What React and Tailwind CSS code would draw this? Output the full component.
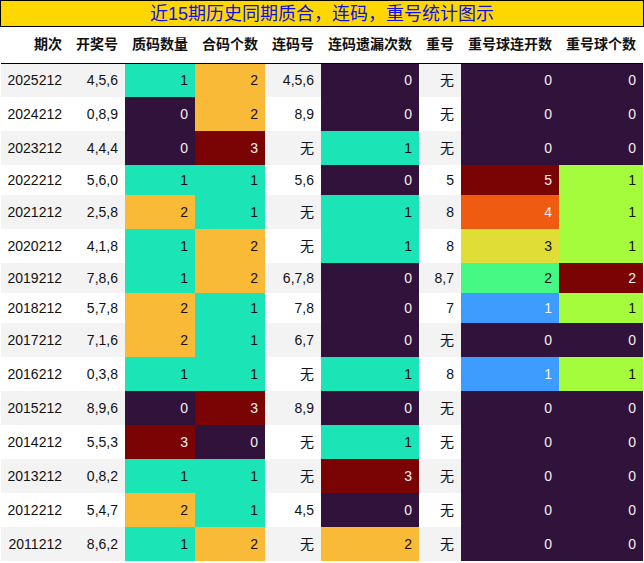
const rows = [
    ["2025212", "4,5,6", 1, 2, "4,5,6", 0, "无", 0, 0],
    ["2024212", "0,8,9", 0, 2, "8,9", 0, "无", 0, 0],
    ["2023212", "4,4,4", 0, 3, "无", 1, "无", 0, 0],
    ["2022212", "5,6,0", 1, 1, "5,6", 0, "5", 5, 1],
    ["2021212", "2,5,8", 2, 1, "无", 1, "8", 4, 1],
    ["2020212", "4,1,8", 1, 2, "无", 1, "8", 3, 1],
    ["2019212", "7,8,6", 1, 2, "6,7,8", 0, "8,7", 2, 2],
    ["2018212", "5,7,8", 2, 1, "7,8", 0, "7", 1, 1],
    ["2017212", "7,1,6", 2, 1, "6,7", 0, "无", 0, 0],
    ["2016212", "0,3,8", 1, 1, "无", 1, "8", 1, 1],
    ["2015212", "8,9,6", 0, 3, "8,9", 0, "无", 0, 0],
    ["2014212", "5,5,3", 3, 0, "无", 1, "无", 0, 0],
    ["2013212", "0,8,2", 1, 1, "无", 3, "无", 0, 0],
    ["2012212", "5,4,7", 2, 1, "4,5", 0, "无", 0, 0],
    ["2011212", "8,6,2", 1, 2, "无", 2, "无", 0, 0],
]

const headers = [
    ["期次", "w-[68px]"],
    ["开奖号", "w-[56px]"],
    ["质码数量", "w-[70px]"],
    ["合码个数", "w-[70px]"],
    ["连码号", "w-[56px]"],
    ["连码遗漏次数", "w-[98px]"],
    ["重号", "w-[42px]"],
    ["重号球连开数", "w-[98px]"],
    ["重号球个数", "w-[84px]"],
]

// turbo-like colour steps for each heat column
const scale3 = {
    0: "bg-[#30123b] text-[#f1f1f1]",
    1: "bg-[#1be4b6] text-[#111]",
    2: "bg-[#f9ba38] text-[#111]",
    3: "bg-[#7a0403] text-[#f1f1f1]",
}
const scale5 = {
    0: "bg-[#30123b] text-[#f1f1f1]",
    1: "bg-[#3e9cfe] text-[#f1f1f1]",
    2: "bg-[#46f884] text-[#111]",
    3: "bg-[#e1dd37] text-[#111]",
    4: "bg-[#f05b12] text-[#f1f1f1]",
    5: "bg-[#7a0403] text-[#f1f1f1]",
}
const scale2 = {
    0: "bg-[#30123b] text-[#f1f1f1]",
    1: "bg-[#a4fc3c] text-[#111]",
    2: "bg-[#7a0403] text-[#f1f1f1]",
}

const heat = { 2: scale3, 3: scale3, 5: scale3, 7: scale5, 8: scale2 }

function App() {
    return (
        <div className="w-[644px] h-[563px] bg-white font-['Liberation_Sans','Noto_Sans_CJK_SC',sans-serif] text-[14px] text-[#111]">
            <div className="h-[27px] border border-black bg-[#ffd700] flex items-center justify-center text-[18px] leading-none text-[#1010e8]">
                近15期历史同期质合，连码，重号统计图示
            </div>
            <table className="ml-px w-[642px] table-fixed border-collapse">
                <thead>
                    <tr className="h-[36px] border-b border-black">
                        {headers.map(([h, w]) => (
                            <th key={h} className={`${w} text-right pr-[7px] font-bold text-[#111] whitespace-nowrap`}>
                                {h}
                            </th>
                        ))}
                    </tr>
                </thead>
                <tbody>
                    {rows.map((row, i) => {
                        const tall = row.includes("无")
                        return (
                            <tr key={row[0]} className={`${tall ? "h-[34px]" : "h-[30px]"} ${i % 2 === 0 ? "bg-[#f3f3f3]" : "bg-white"}`}>
                                {row.map((v, j) => (
                                    <td key={j} className={`p-0 pr-[7px] text-right leading-none whitespace-nowrap ${heat[j] ? heat[j][v] : ""}`}>
                                        {v}
                                    </td>
                                ))}
                            </tr>
                        )
                    })}
                </tbody>
            </table>
        </div>
    )
}

export default App
